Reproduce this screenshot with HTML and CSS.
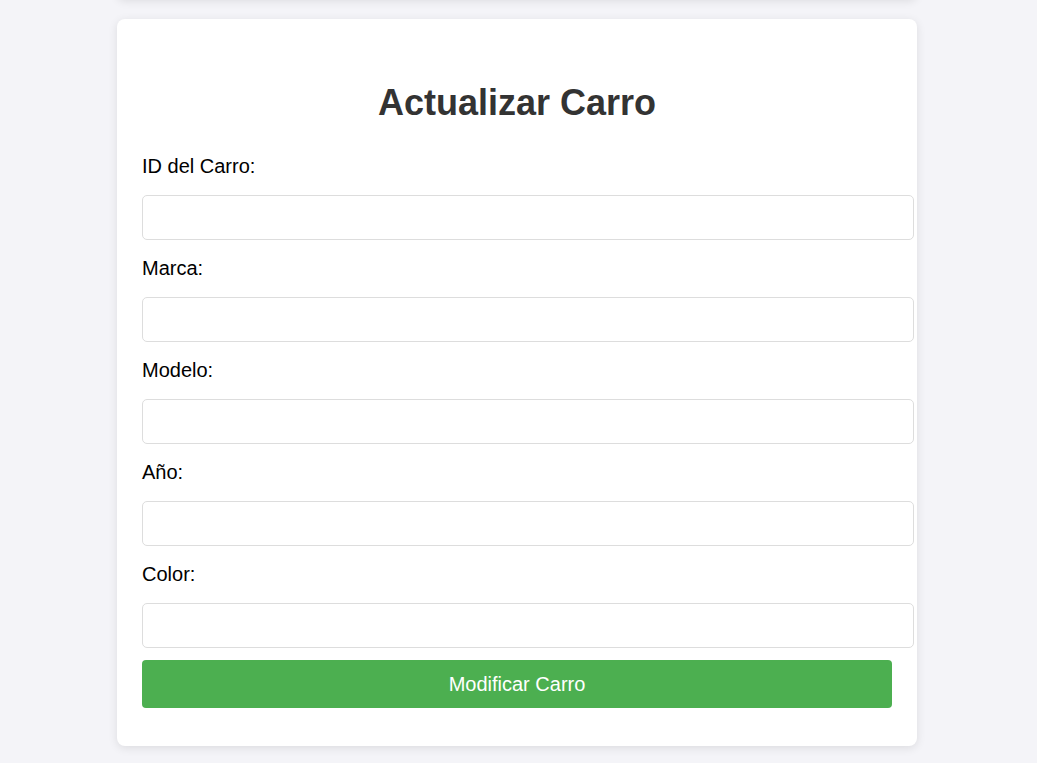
FILE: index.html
```html
<!DOCTYPE html>
<html lang="es">
<head>
<meta charset="utf-8">
<title>Actualizar Carro</title>
<link rel="stylesheet" href="styles.css">
</head>
<body>
<div class="page">
  <div class="card card-prev"></div>
  <div class="card">
    <h1 class="title">Actualizar Carro</h1>
    <form class="form">
      <label class="label" for="id">ID del Carro:</label>
      <input class="input" type="text" id="id">
      <label class="label" for="marca">Marca:</label>
      <input class="input" type="text" id="marca">
      <label class="label" for="modelo">Modelo:</label>
      <input class="input" type="text" id="modelo">
      <label class="label" for="anio">Año:</label>
      <input class="input" type="text" id="anio">
      <label class="label" for="color">Color:</label>
      <input class="input" type="text" id="color">
      <button class="button" type="button">Modificar Carro</button>
    </form>
  </div>
</div>
</body>
</html>
```

FILE: styles.css
```css
html, body {
  margin: 0;
  padding: 0;
  background: #f4f4f8;
  font-family: "Liberation Sans", Arial, sans-serif;
}

.page {
  display: flex;
  flex-direction: column;
  align-items: center;
  gap: 20px;
  padding-right: 3px;
  padding-bottom: 40px;
}

.card {
  width: 750px;
  background: #ffffff;
  border-radius: 8px;
  box-shadow: 0 2px 10px rgba(0, 0, 0, 0.1);
  padding: 25px;
}

.card-prev {
  padding-top: 0;
  padding-bottom: 0;
  margin-top: -41px;
  height: 40px;
}

.title {
  margin: 38px 0 15px;
  font-size: 36px;
  line-height: 41px;
  font-weight: bold;
  color: #333333;
  text-align: center;
}

.form {
  margin: 0;
  display: flex;
  flex-direction: column;
  align-items: flex-start;
}

.label {
  display: block;
  margin: 17px 0 17px;
  font-size: 20px;
  line-height: 23px;
  color: #000000;
}

.input {
  display: block;
  width: 100%;
  height: 23px;
  padding: 10px;
  margin: 0;
  border: 1px solid #dddddd;
  border-radius: 5px;
  font-family: "Liberation Sans", Arial, sans-serif;
  font-size: 18px;
  background: #ffffff;
}

.button {
  display: block;
  width: 100%;
  height: 48px;
  margin: 12px 0 13px;
  border: none;
  border-radius: 4px;
  background: #4caf50;
  color: #ffffff;
  font-family: "Liberation Sans", Arial, sans-serif;
  font-size: 20px;
  cursor: pointer;
}
```
